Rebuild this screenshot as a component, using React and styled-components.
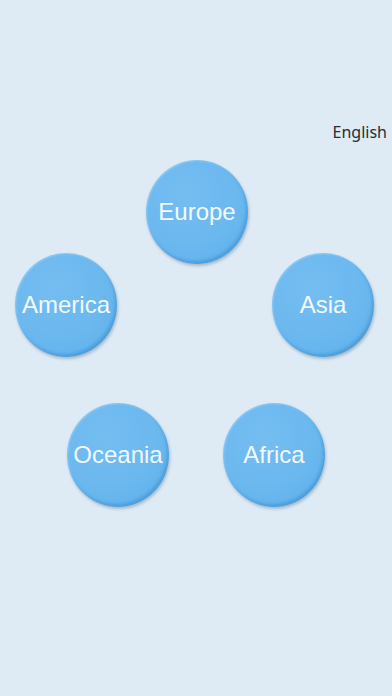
import React from 'react';
import styled, { createGlobalStyle } from 'styled-components';

const GlobalStyle = createGlobalStyle`
  html, body {
    margin: 0;
    padding: 0;
    background: #deebf5;
  }
  body {
    font-family: "Liberation Sans", Arial, sans-serif;
  }
`;

const Screen = styled.div`
  width: 392px;
  height: 696px;
  background: #deebf5;
  display: flex;
  flex-direction: column;
  overflow: hidden;
`;

const LanguageBar = styled.div`
  display: flex;
  justify-content: flex-end;
  margin-top: 122px;
  padding-right: 5px;
`;

const LanguageLink = styled.span`
  font-family: "Noto Sans", "Open Sans", sans-serif;
  font-size: 16px;
  line-height: 20px;
  color: #262d33;
`;

const Row = styled.div`
  display: flex;
  justify-content: ${p => p.justify || 'center'};
  gap: ${p => p.gap || 0}px;
  margin-top: ${p => p.top || 0}px;
  padding: 0 ${p => p.right || 0}px 0 ${p => p.left || 0}px;
`;

const Bubble = styled.button`
  width: 102px;
  height: 104px;
  border-radius: 50%;
  border: none;
  padding: 0;
  flex: none;
  display: flex;
  align-items: center;
  justify-content: center;
  background: radial-gradient(circle at 38% 32%, #74bdf1 0%, #6bb8ef 55%, #5aaeeb 100%);
  box-shadow:
    inset -2px -3px 3px rgba(40, 120, 190, 0.35),
    inset 1px 1px 2px rgba(255, 255, 255, 0.25),
    1px 2px 3px rgba(40, 70, 100, 0.3);
  color: #f3f9fd;
  font-family: "Liberation Sans", Arial, sans-serif;
  font-size: 24px;
  cursor: pointer;
`;

const continents = {
  top: ['Europe'],
  middle: ['America', 'Asia'],
  bottom: ['Oceania', 'Africa'],
};

const App = () => (
  <>
    <GlobalStyle />
    <Screen>
      <LanguageBar>
        <LanguageLink>English</LanguageLink>
      </LanguageBar>
      <Row top={18} left={2}>
        {continents.top.map(c => <Bubble key={c}>{c}</Bubble>)}
      </Row>
      <Row top={-11} justify="space-between" left={15} right={18}>
        {continents.middle.map(c => <Bubble key={c}>{c}</Bubble>)}
      </Row>
      <Row top={46} gap={54}>
        {continents.bottom.map(c => <Bubble key={c}>{c}</Bubble>)}
      </Row>
    </Screen>
  </>
);

export default App;
